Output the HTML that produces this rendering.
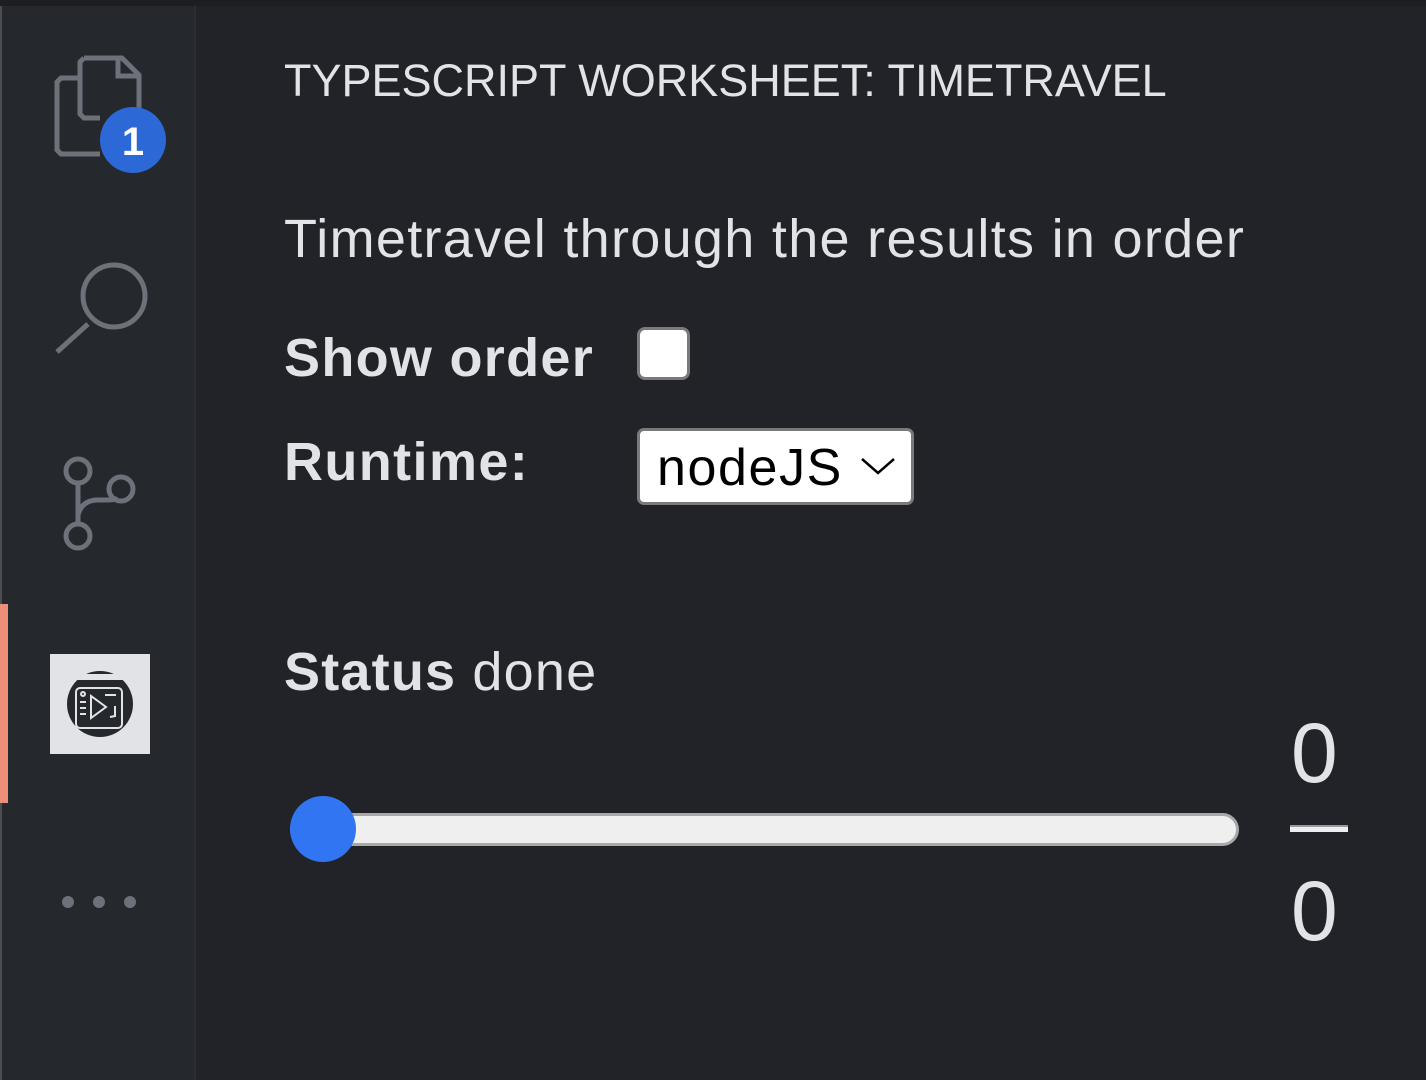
<!DOCTYPE html>
<html><head><meta charset="utf-8"><style>
*{margin:0;padding:0;box-sizing:border-box}
body{width:1426px;height:1080px;background:#212328;position:relative;overflow:hidden;font-family:"Liberation Sans",Arial,sans-serif;color:#e2e3e7}
.t{position:absolute;line-height:1;white-space:nowrap}
#side{position:absolute;left:0;top:0;width:196px;height:1080px;background:#25282d;border-left:2px solid #4a4d53;border-right:2px solid #2b2e33}
#top{position:absolute;left:0;top:0;width:1426px;height:6px;background:#1c1e22}
</style></head><body>
<div id="side"></div>
<div id="top"></div>
<div style="position:absolute;left:0;top:604px;width:8px;height:199px;background:#ef8f7a"></div>
<svg style="position:absolute;left:0;top:0" width="196" height="1080">
 <g fill="none" stroke="#6c717a" stroke-width="5">
  <path d="M80 78 L61 78 L57 82 L57 150 L61 154 L100 154"/>
  <path d="M84 58 L122 58 L139 75 L139 110 M84 58 L80 62 L80 114 L84 118 L100 118"/>
  <path d="M118 58 L118 76 L139 76"/>
  <circle cx="114" cy="296" r="31"/>
  <path d="M88 324 L57 352"/>
  <circle cx="78" cy="471" r="12"/>
  <circle cx="121" cy="489" r="12"/>
  <circle cx="78" cy="536" r="12"/>
  <path d="M78 483 L78 524 M78 515 Q82 500 98 500 L108 500 Q116 500 118 498"/>
 </g>
 <circle cx="133" cy="140" r="33" fill="#2d69d6"/>
 <text x="133" y="155" fill="#fff" font-family="Liberation Sans" font-weight="bold" font-size="40" text-anchor="middle">1</text>
 <rect x="50" y="654" width="100" height="100" fill="#e2e3e7"/>
 <circle cx="100" cy="704" r="33" fill="#25282d"/>
 <rect x="73" y="674" width="54" height="6" fill="#e2e3e7"/>
 <g fill="none" stroke="#e2e3e7" stroke-width="2">
  <rect x="76" y="688" width="46" height="40" rx="4"/>
  <path d="M91 696 L91 718 L106 707 Z"/>
  <circle cx="83" cy="694" r="2"/>
  <path d="M80 702 L86 702 M80 708 L86 708 M80 714 L86 714 M105 695 L116 695 M115 706 L115 716 L110 717"/>
 </g>
 <g fill="#6c717a"><circle cx="68" cy="902" r="6"/><circle cx="99" cy="902" r="6"/><circle cx="130" cy="902" r="6"/></g>
</svg>
<div class="t" style="left:284px;top:58px;font-size:45px">TYPESCRIPT WORKSHEET: TIMETRAVEL</div>
<div class="t" style="left:284px;top:212px;font-size:54px;letter-spacing:1.3px">Timetravel through the results in order</div>
<div class="t" style="left:284px;top:331px;font-size:54px;font-weight:bold;letter-spacing:1.3px">Show order</div>
<div class="t" style="left:284px;top:435px;font-size:54px;font-weight:bold;letter-spacing:1.4px">Runtime:</div>
<div class="t" style="left:284px;top:645px;font-size:54px;letter-spacing:1.2px"><b>Status</b> done</div>
<div style="position:absolute;left:637px;top:327px;width:53px;height:53px;background:#fff;border:3px solid #7a7a7a;border-radius:8px"></div>
<div style="position:absolute;left:637px;top:428px;width:277px;height:77px;background:#fff;border:3px solid #7a7a7a;border-radius:7px"></div>
<div class="t" style="left:657px;top:442px;font-size:52px;color:#000;letter-spacing:1.6px">nodeJS</div>
<svg style="position:absolute;left:860px;top:455px" width="40" height="24"><path d="M2 4 L18 18 L34 4" fill="none" stroke="#000" stroke-width="2.5"/></svg>
<div style="position:absolute;left:290px;top:813px;width:949px;height:33px;background:#efefef;border:3px solid #a8a8a8;border-radius:17px"></div>
<div style="position:absolute;left:290px;top:796px;width:66px;height:66px;background:#3175f3;border-radius:50%"></div>
<div class="t" style="left:1291px;top:711px;font-size:84px">0</div>
<div style="position:absolute;left:1290px;top:825px;width:58px;height:7px;background:#efefef;border-top:2px solid #999"></div>
<div class="t" style="left:1291px;top:869px;font-size:84px">0</div>
</body></html>
